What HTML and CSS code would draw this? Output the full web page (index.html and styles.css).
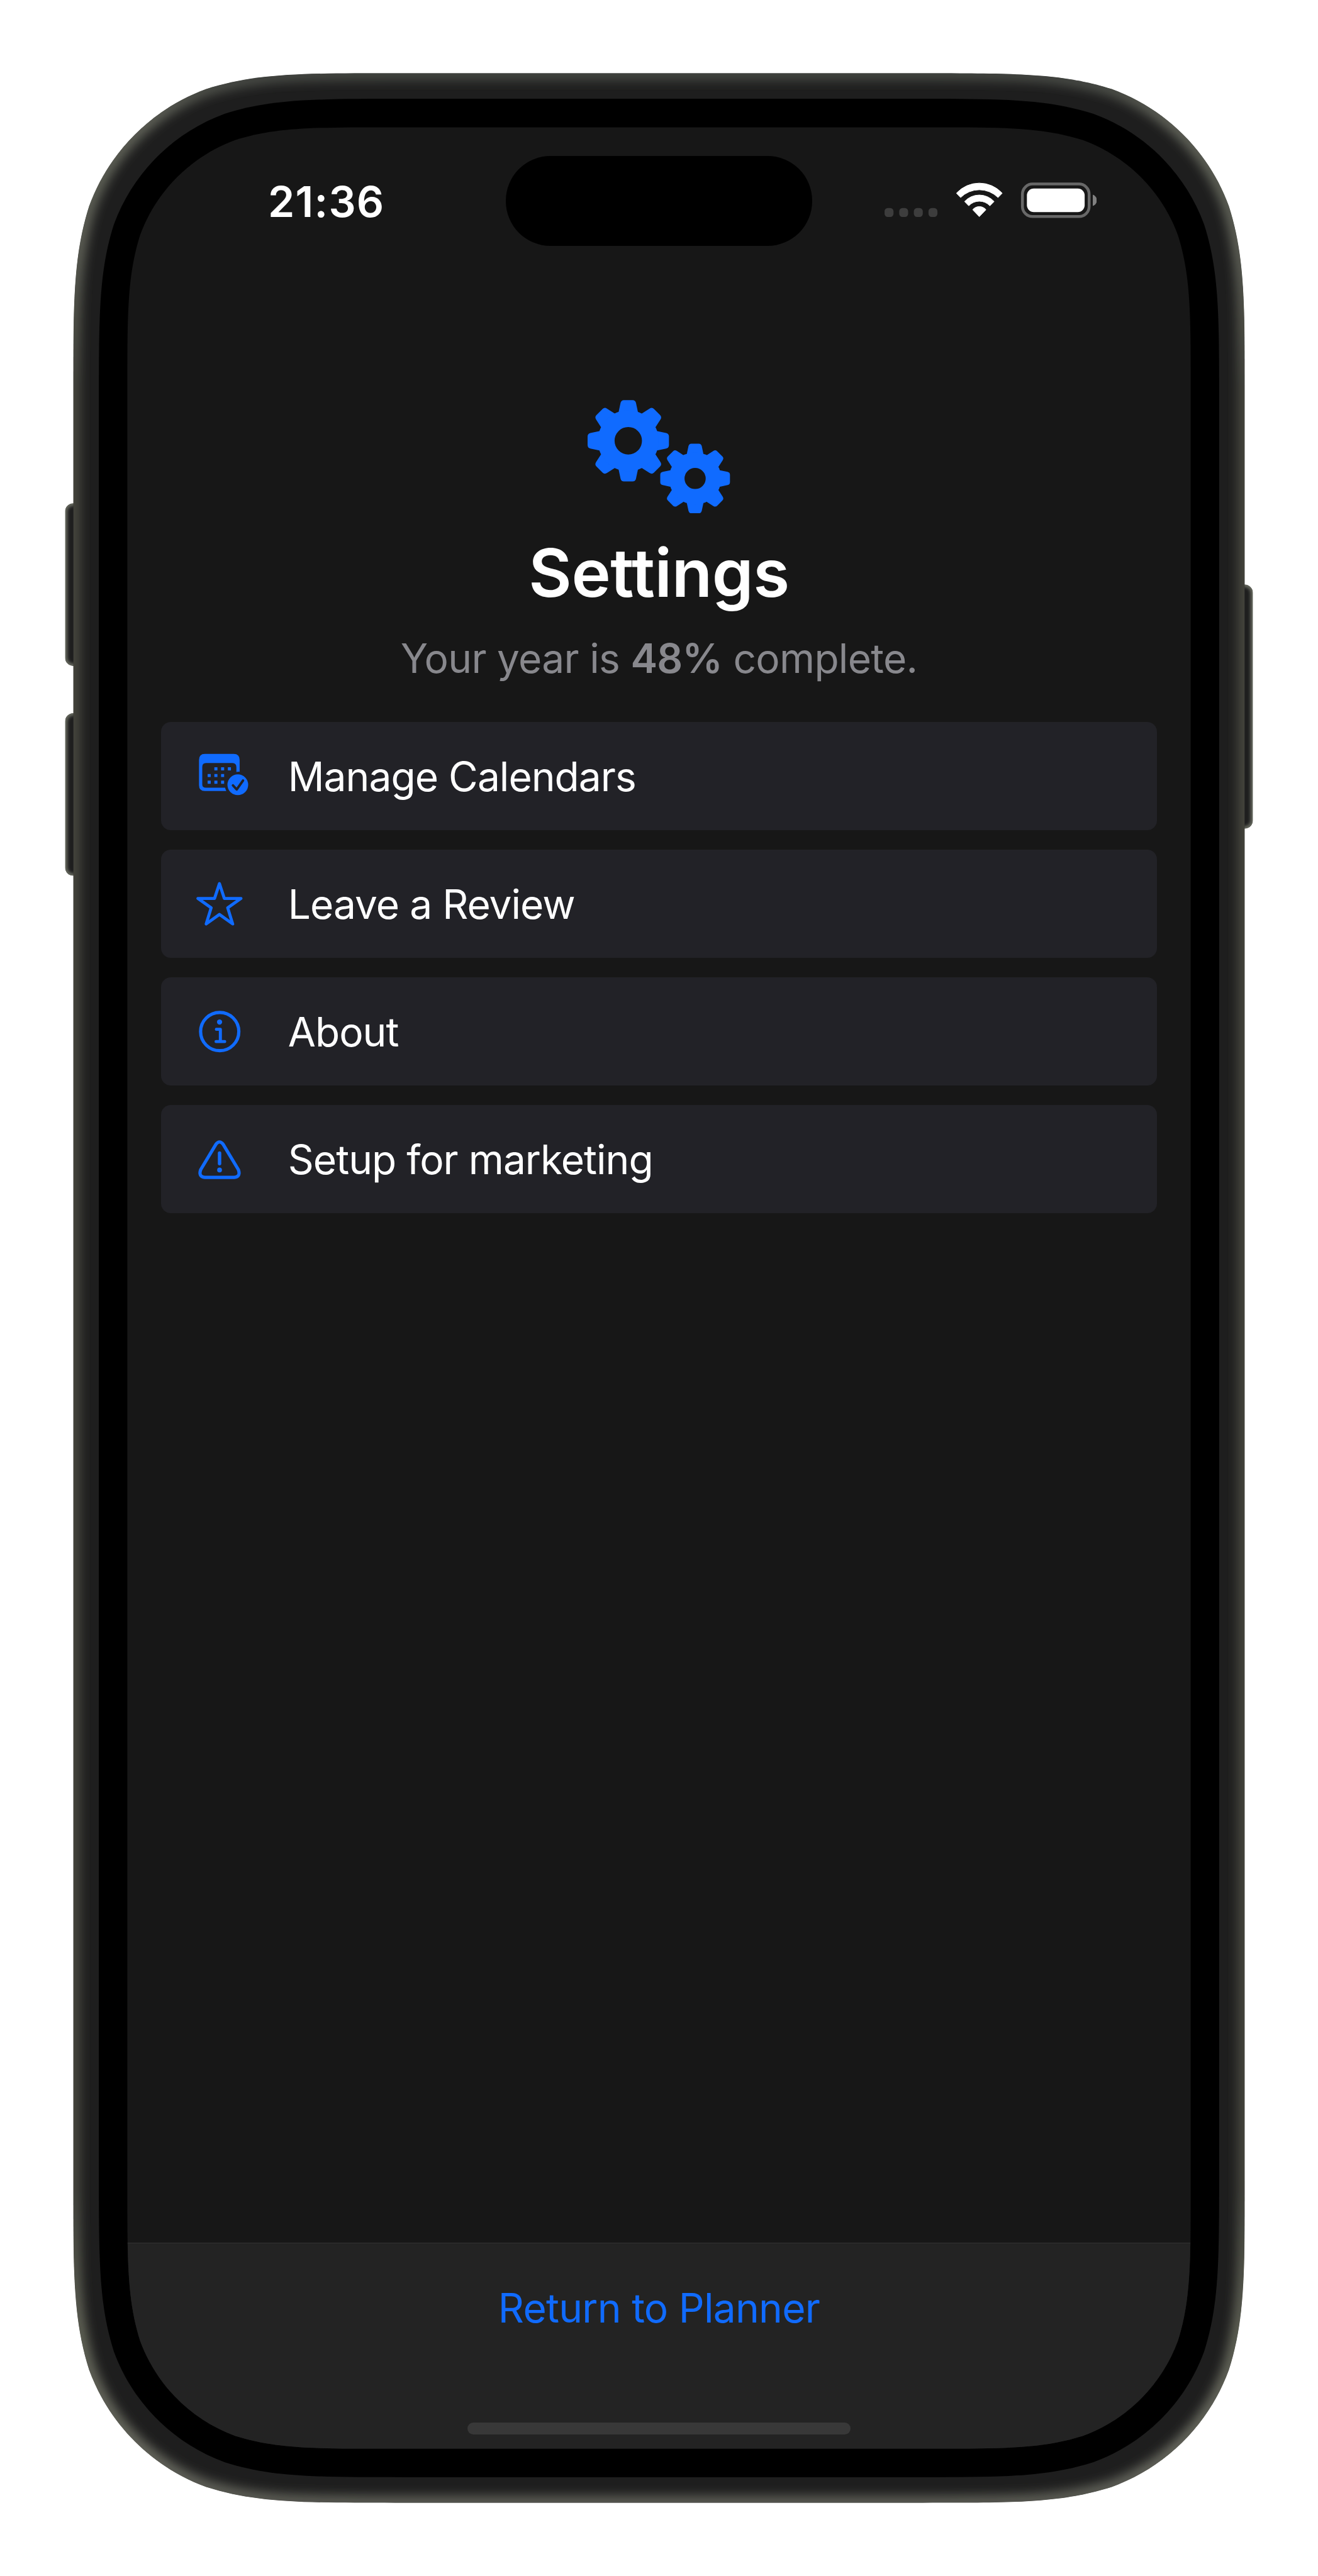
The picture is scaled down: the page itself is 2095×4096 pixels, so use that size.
FILE: index.html
```html
<!DOCTYPE html>
<html lang="en">
<head>
<meta charset="utf-8">
<title>Settings</title>
<link rel="stylesheet" href="styles.css">
</head>
<body>
<div class="device">
  <svg class="shell" viewBox="0 0 3240 6336" preserveAspectRatio="none" aria-hidden="true">
    <defs>
      <path id="frame" d="M180 972C180 744 180 630 219 507C268 373 373 268 507 219C630 180 744 180 972 180H2268C2496 180 2610 180 2733 219C2867 268 2972 373 3021 507C3060 630 3060 744 3060 972V5364C3060 5592 3060 5706 3021 5829C2972 5963 2867 6068 2733 6117C2610 6156 2496 6156 2268 6156H972C744 6156 630 6156 507 6117C373 6068 268 5963 219 5829C180 5706 180 5592 180 5364Z"/>
      <rect id="key-up" x="160" y="1238" width="60" height="400" rx="20"/>
      <rect id="key-down" x="160" y="1754" width="60" height="400" rx="20"/>
      <rect id="key-side" x="3020" y="1438" width="60" height="600" rx="20"/>
      <clipPath id="frame-clip"><use href="#frame"/></clipPath>
      <clipPath id="keys-clip"><use href="#key-up"/><use href="#key-down"/><use href="#key-side"/></clipPath>
      <clipPath id="screen-clip" clipPathUnits="objectBoundingBox">
        <path transform="scale(0.000382555 0.000175131)" d="M0 642C0 457 0 365 31.5 265C71 157 157 71 265 31.5C365 0 457 0 642 0H1972C2157 0 2249 0 2349 31.5C2457 71 2543 157 2582.5 265C2614 365 2614 457 2614 642V5068C2614 5253 2614 5345 2582.5 5445C2543 5553 2457 5639 2349 5678.5C2249 5710 2157 5710 1972 5710H642C457 5710 365 5710 265 5678.5C157 5639 71 5553 31.5 5445C0 5345 0 5253 0 5068Z"/>
      </clipPath>
      <linearGradient id="edge" gradientUnits="userSpaceOnUse" x1="0" y1="180" x2="0" y2="6156">
        <stop offset="0" stop-color="#454843"/>
        <stop offset=".02" stop-color="#62645a"/>
        <stop offset=".07" stop-color="#606258"/>
        <stop offset=".13" stop-color="#484941"/>
        <stop offset=".87" stop-color="#484941"/>
        <stop offset=".93" stop-color="#646659"/>
        <stop offset=".98" stop-color="#6a6b61"/>
        <stop offset="1" stop-color="#5e5f57"/>
      </linearGradient>
      <filter id="soft" filterUnits="userSpaceOnUse" x="100" y="100" width="3040" height="6136"><feGaussianBlur stdDeviation="13"/></filter>
      <filter id="soft-key" filterUnits="userSpaceOnUse" x="100" y="1100" width="3040" height="1200"><feGaussianBlur stdDeviation="4"/></filter>
    </defs>
    <g clip-path="url(#keys-clip)">
      <g fill="#1e1e1e"><use href="#key-up"/><use href="#key-down"/><use href="#key-side"/></g>
      <g fill="none" stroke="#6c6e64" stroke-width="11" filter="url(#soft-key)"><use href="#key-up"/><use href="#key-down"/><use href="#key-side"/></g>
    </g>
    <g clip-path="url(#frame-clip)">
      <use href="#frame" fill="#1e1e1e"/>
      <use href="#frame" fill="none" stroke="url(#edge)" stroke-width="34" filter="url(#soft)"/>
    </g>
    <path d="M243 992C243 776 243 668 280 552C326 426 426 326 552 280C668 243 776 243 992 243H2248C2464 243 2572 243 2688 280C2814 326 2914 426 2960 552C2997 668 2997 776 2997 992V5344C2997 5560 2997 5668 2960 5784C2914 5910 2814 6010 2688 6056C2572 6093 2464 6093 2248 6093H992C776 6093 668 6093 552 6056C426 6010 326 5910 280 5784C243 5668 243 5560 243 5344Z"/>
  </svg>

  <div class="screen">
    <div class="status">
      <span class="time">21:36</span>
      <div class="island"></div>
      <svg class="status-icons" viewBox="2174 449 522 88" aria-hidden="true">
        <g fill="#3d3d3d">
          <rect x="2174" y="512" width="22" height="22" rx="8"/><rect x="2210" y="512" width="22" height="22" rx="8"/><rect x="2246" y="512" width="22" height="22" rx="8"/><rect x="2282" y="512" width="22" height="22" rx="8"/>
        </g>
        <g fill="#fff" stroke="#fff" stroke-width="1.5" stroke-linejoin="round">
          <path d="M2350.7 475.7A76 76 0 0 1 2463.3 475.7L2453 486.3A65 65 0 0 0 2361 486.3Z"/>
          <path d="M2370.7 496A49.300 49.300 0 0 1 2443.300 496L2433 506.600A35.600 35.600 0 0 0 2381 506.600Z"/>
          <path d="M2390.700 516.200A21 21 0 0 1 2423.300 516.200L2407 533.300Z"/>
        </g>
        <rect x="2513" y="453" width="164" height="80" rx="25" fill="none" stroke="#686868" stroke-width="7"/>
        <rect x="2524" y="464" width="142" height="58" rx="17" fill="#fff"/>
        <path d="M2686 479Q2696 483 2696 493T2686 507Z" fill="#818181"/>
      </svg>
    </div>

    <main class="content">
      <svg class="gears" viewBox="132 99 1050 837" aria-hidden="true">
        <defs>
          <path id="tooth" d="M-71-213L-57-279Q-52-300-32-300H32Q52-300 57-279L71-213L60-170H-60Z"/>
          <g id="teeth">
            <use href="#tooth"/><use href="#tooth" transform="rotate(45)"/><use href="#tooth" transform="rotate(90)"/><use href="#tooth" transform="rotate(135)"/><use href="#tooth" transform="rotate(180)"/><use href="#tooth" transform="rotate(225)"/><use href="#tooth" transform="rotate(270)"/><use href="#tooth" transform="rotate(315)"/>
          </g>
        </defs>
        <g transform="translate(432 400)" fill="#106bff">
          <use href="#teeth"/>
          <circle r="162.500" fill="none" stroke="#106bff" stroke-width="123"/>
        </g>
        <g transform="translate(925 678)" fill="#106bff">
          <use href="#teeth" transform="scale(.857)"/>
          <circle r="135" fill="none" stroke="#106bff" stroke-width="114"/>
        </g>
      </svg>
      <h1 class="title">Settings</h1>
      <p class="subtitle">Your year is <b>48%</b> complete.</p>

      <nav class="menu">
        <a class="row">
          <svg class="icon" viewBox="480 -70 140 140" aria-hidden="true">
            <path fill="#106bff" fill-rule="evenodd" d="M504-55H575Q589.700-55 589.700-40V-11A32 32 0 0 0 581.700-10.500V-22Q581.700-32.400 572-32.400H507Q497.800-32.400 497.800-23V20Q497.800 28.400 507 28.400H554Q554.500 32 557 36.400H504Q489.800 36.400 489.800 22V-40Q489.800-55 504-55Z"/>
            <path fill="#106bff" d="M527.500-22h7.600v7.600h-7.600zM544-22h7.600v7.600h-7.600zM560.700-22h7.600v7.600h-7.600zM511-5.500h7.600v7.600h-7.600zM527.500-5.500h7.600v7.600h-7.600zM544-5.500h7.600v7.600h-7.600zM511 10.900h7.600v7.600h-7.600zM527.500 10.900h7.600v7.600h-7.600zM544 10.900h7.600v7.600h-7.600z"/>
            <circle cx="585.200" cy="21" r="25.500" fill="#106bff"/>
            <path d="M573.200 22.500L582.400 32.500L598 10.500" fill="none" stroke="#222227" stroke-width="6" stroke-linecap="round" stroke-linejoin="round"/>
          </svg>
          <span>Manage Calendars</span>
        </a>
        <a class="row">
          <svg class="icon line" viewBox="480 -70 140 140" aria-hidden="true">
            <path d="M540-49.800L552-13.400H593L560.300 9.500L572.600 49.300L540 26L507.400 49.300L519.700 9.500L487-13.400H528Z" stroke-width="7.500"/>
          </svg>
          <span>Leave a Review</span>
        </a>
        <a class="row">
          <svg class="icon line" viewBox="480 -70 140 140" aria-hidden="true">
            <circle cx="540.700" cy="0" r="47"/>
            <path d="M532.500-5.600H542.300V24.600M531.700 24.600H553" stroke-width="7.500"/>
            <circle class="dot" cx="540.300" cy="-23.500" r="6.400"/>
          </svg>
          <span>About</span>
        </a>
        <a class="row">
          <svg class="icon line" viewBox="480 -70 140 140" aria-hidden="true">
            <path d="M531.500-37Q540.200-48 549-37L586.500 25.500Q593 43 576 44.700H504.500Q487.500 43 494 25.500Z"/>
            <path d="M540.300-15V11" stroke-width="8.400"/>
            <circle class="dot" cx="540.300" cy="26.500" r="5.900"/>
          </svg>
          <span>Setup for marketing</span>
        </a>
      </nav>
    </main>

    <footer class="toolbar">
      <a class="return">Return to Planner</a>
      <div class="home"></div>
    </footer>
  </div>
</div>
</body>
</html>
```
FILE: styles.css
```css
/* 1rem is one hundredth-scale design unit: 100 design px */
html {
  font-size: 64.66px;
}

body {
  margin: 0;
  background: #fff;
  font-family: Inter, "Liberation Sans", sans-serif;
}

.device {
  position: relative;
  box-sizing: border-box;
  width: 2095px;
  height: 4096px;
  padding: 3.13rem;
  overflow: hidden;
}

.shell {
  position: absolute;
  inset: 0;
  width: 100%;
  height: 100%;
}

.screen {
  position: relative;
  display: flex;
  flex-direction: column;
  height: 100%;
  background: #171717;
  clip-path: url(#screen-clip);
}

.status {
  position: relative;
  display: flex;
  align-items: center;
  justify-content: space-between;
  box-sizing: border-box;
  flex: none;
  height: 3.66rem;
  padding: 0 2.31rem 0.03rem 3.46rem;
}

.time {
  color: #fff;
  font-size: 1.05rem;
  font-weight: 600;
  letter-spacing: 0.018em;
}

.island {
  position: absolute;
  top: 0.71rem;
  left: 9.31rem;
  width: 7.52rem;
  height: 2.2rem;
  border-radius: 1.1rem;
  background: #000;
}

.status-icons {
  width: 5.22rem;
  height: 0.88rem;
  margin-bottom: 0.03rem;
}

.content {
  display: flex;
  flex: 1;
  flex-direction: column;
  align-items: center;
  padding: 3.04rem 0.83rem 0;
}

.gears {
  width: 3.5rem;
  height: 2.79rem;
}

.title {
  margin: 0.46rem 0 0;
  color: #fff;
  font-size: 1.63rem;
  font-weight: 600;
  line-height: 2rem;
  letter-spacing: -0.004em;
  font-feature-settings: "calt" 0, "liga" 0;
}

.subtitle {
  margin: 0.5rem 0 0;
  color: #88888d;
  font-size: 0.99rem;
  line-height: 1.24rem;
  letter-spacing: -0.011em;
}

.subtitle b {
  font-weight: 600;
}

.menu {
  display: flex;
  flex-direction: column;
  gap: 0.48rem;
  align-self: stretch;
  margin-top: 0.94rem;
}

.row {
  display: flex;
  align-items: center;
  gap: 0.88rem;
  box-sizing: border-box;
  height: 2.66rem;
  padding-left: 0.84rem;
  border-radius: 0.24rem;
  background: #222227;
  color: #fff;
  font-size: 0.99rem;
  letter-spacing: -0.015em;
}

.icon {
  width: 1.4rem;
  height: 1.4rem;
}

.line {
  fill: none;
  stroke: #106bff;
  stroke-width: 8;
  stroke-linecap: round;
  stroke-linejoin: round;
}

.dot {
  fill: #106bff;
  stroke: none;
}

.toolbar {
  display: flex;
  flex: none;
  flex-direction: column;
  align-items: center;
  justify-content: space-between;
  box-sizing: border-box;
  height: 5.07rem;
  padding: 0.98rem 0 0.35rem;
  border-top: 0.02rem solid #333;
  background: #232323;
}

.return {
  color: #106bff;
  font-size: 0.99rem;
  line-height: 1.24rem;
  letter-spacing: -0.011em;
}

.home {
  width: 9.42rem;
  height: 0.3rem;
  border-radius: 0.15rem;
  background: #383838;
}
```
